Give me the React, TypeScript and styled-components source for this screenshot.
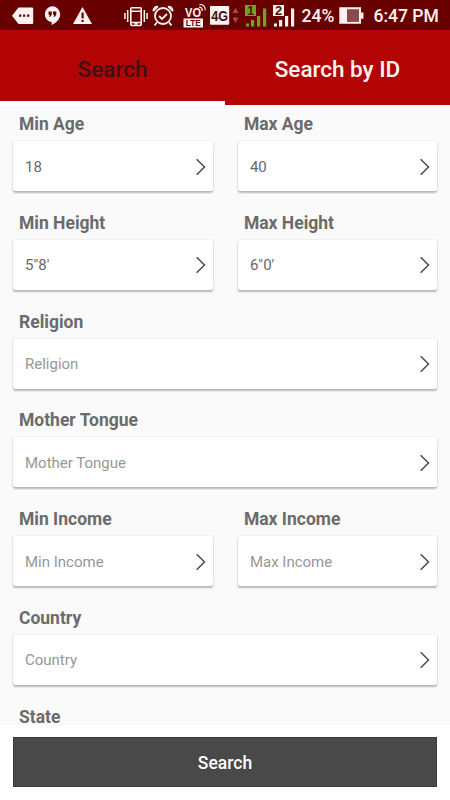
import React from "react";
import styled, { createGlobalStyle } from "styled-components";

const GlobalStyle = createGlobalStyle`
  * { box-sizing: border-box; }
  body { margin: 0; background: #fff; font-family: Roboto, sans-serif; }
  button { font-family: inherit; border: 0; padding: 0; }
`;

const Screen = styled.div`
  width: 450px;
  height: 800px;
  display: flex;
  flex-direction: column;
  overflow: hidden;
  background: #fff;
`;

const StatusBar = styled.header`
  height: 30px;
  flex: none;
  display: flex;
  align-items: stretch;
  background: #680000;
  color: #fff3f1;
`;

const StatusIcon = styled.svg<{ $gap: number }>`
  flex: none;
  display: block;
  height: 30px;
  margin-left: ${(p) => p.$gap}px;
  font-family: "Liberation Sans", sans-serif;
  font-weight: 700;
`;

const StatusText = styled.span<{ $gap: number; $width: number }>`
  flex: none;
  width: ${(p) => p.$width}px;
  margin-left: ${(p) => p.$gap}px;
  font-size: 17.5px;
  font-weight: 500;
  line-height: 33px;
  white-space: nowrap;
`;

const Tabs = styled.nav`
  height: 75px;
  flex: none;
  display: grid;
  grid-template-columns: 1fr 1fr;
`;

const Tab = styled.button<{ $active?: boolean }>`
  background: #b20404;
  border-bottom: 4px solid ${(p) => (p.$active ? "#fff" : "#b20404")};
  color: ${(p) => (p.$active ? "#3e1014" : "#fff3f1")};
  font-size: 22.5px;
  font-weight: 500;
  line-height: 26px;
  padding-top: 6px;
`;

const Form = styled.main`
  height: 620px;
  flex: none;
  overflow: hidden;
  background: #fafafa;
`;

const FieldRow = styled.div`
  display: flex;
  gap: 25px;
  height: 98.75px;
  padding: 0 12.6px;
`;

const Field = styled.div`
  flex: 1;
  min-width: 0;
`;

const Label = styled.div`
  height: 36px;
  padding: 9px 0 0 6.4px;
  font-size: 17.5px;
  font-weight: 700;
  line-height: 21px;
  color: #6b6b6b;
`;

const Picker = styled.div<{ $filled: boolean }>`
  height: 50px;
  display: flex;
  align-items: center;
  justify-content: space-between;
  padding: 1px 7px 0 12.4px;
  border-radius: 2.5px;
  background: #fff;
  box-shadow: 0 1.5px 2px rgba(0, 0, 0, 0.26), 0 0 1.5px rgba(0, 0, 0, 0.14);
  font-size: 15px;
  color: ${(p) => (p.$filled ? "#686868" : "#979797")};
`;

const Chevron = styled.svg`
  display: block;
  width: 10px;
  height: 18px;
  fill: none;
  stroke: #4c4c4c;
  stroke-width: 1.5;
`;

const Footer = styled.footer`
  flex: 1;
  padding: 12.4px 12.6px 0;
  background: #fff;
`;

const SearchButton = styled.button`
  display: block;
  width: 100%;
  height: 50px;
  background: #494949;
  border: 1px solid #3b3b3b;
  color: #fff;
  font-size: 17.5px;
  font-weight: 500;
  line-height: 51px;
`;

type FieldData = { label: string; value?: string };

const rows: FieldData[][] = [
  [{ label: "Min Age", value: "18" }, { label: "Max Age", value: "40" }],
  [{ label: "Min Height", value: "5\"8'" }, { label: "Max Height", value: "6\"0'" }],
  [{ label: "Religion" }],
  [{ label: "Mother Tongue" }],
  [{ label: "Min Income" }, { label: "Max Income" }],
  [{ label: "Country" }],
];

function SimSignal({ sim, color, gap }: { sim: string; color: string; gap: number }) {
  return (
    <StatusIcon $gap={gap} width="22" viewBox="0 0 22 30" fill={color}>
      <path d="M0 5h11v11H0z" />
      <path d="M1 23.500h3v3H1zM6 20h3.200v6.500H6zM12 16h3.200v10.500H12zM18 8.500h3.200v18H18z" />
      <text x="5.500" y="15" fontSize="13" textAnchor="middle" fill="#4a1600">{sim}</text>
    </StatusIcon>
  );
}

export default function App() {
  return (
    <Screen>
      <GlobalStyle />
      <StatusBar>
        <StatusIcon $gap={12} width="22" viewBox="0 0 22 30" fill="#fff3f1">
          <path d="M6.500 7.500H20q1.200 0 1.200 1.200v14q0 1.200-1.200 1.200H6.500L0 15.700z" />
          <path fill="#680000" d="M7 14.500h2.300v2.300H7zM11 14.500h2.300v2.300H11zM15 14.500h2.300v2.300H15z" />
        </StatusIcon>
        <StatusIcon $gap={10} width="17" viewBox="0 0 17 30" fill="#fff3f1">
          <path d="M8.200 6.300a8 8 0 0 1 8 8c0 4.500-3.600 8.500-8.500 10.700v-2.800A8 8 0 0 1 8.200 6.300z" />
          <path fill="#680000" d="M4.500 11.500h3.300v3.300l-1.500 2H5l.7-2H4.500zM9 11.500h3.300v3.300l-1.500 2H9.500l.7-2H9z" />
        </StatusIcon>
        <StatusIcon $gap={12} width="19" viewBox="0 0 19 30" fill="#fff3f1">
          <path d="M9.500 7L19 24H0z" />
          <path fill="#680000" d="M8.500 12.500h2.200v6H8.500zM8.500 20h2.200v2H8.500z" />
        </StatusIcon>
        <StatusIcon $gap={32} width="24" viewBox="0 0 24 30" fill="none" stroke="#fff3f1" strokeWidth="1.5">
          <path d="M.9 13v6M3.700 10v12M20.300 10v12M23.100 13v6" />
          <rect x="6.800" y="7.700" width="10.400" height="17.800" rx="1" strokeWidth="1.600" />
          <path d="M7 11.200h10M7 22.500h10M10.500 24h3" />
        </StatusIcon>
        <StatusIcon $gap={4} width="22" viewBox="0 0 22 30" fill="none" stroke="#fff3f1" strokeWidth="1.800">
          <circle cx="11" cy="16" r="8" />
          <path d="M7 16l3 3 5-5M4.800 22.500L2.500 25.500M17.200 22.500l2.300 3M1 11.200L5.500 6.600M21 11.200l-4.500-4.600" />
          <path strokeWidth="1.300" d="M6.200 6.800C4 5.700 1 8 1.300 11M15.800 6.800c2.200-1.100 5.200 1.200 4.900 4.200" />
        </StatusIcon>
        <StatusIcon $gap={9} width="24" viewBox="0 0 24 30" fill="#fff3f1">
          <text x="2" y="17" fontSize="12" textLength="16" lengthAdjust="spacingAndGlyphs">VO</text>
          <path d="M.5 18.500h19.500v9H.5z" />
          <text x="2.800" y="26.200" fontSize="9" textLength="15" lengthAdjust="spacingAndGlyphs" fill="#680000">LTE</text>
          <path fill="none" stroke="#fff3f1" strokeWidth="1.200" d="M16 7.200q3.300 0 3.300 3.700M16.500 4.300q5.800 0 5.800 6" />
        </StatusIcon>
        <StatusIcon $gap={3} width="20" viewBox="0 0 20 30" fill="#fff3f1">
          <rect x="0" y="6" width="19.200" height="18.700" rx="1" />
          <text x="1.200" y="20.500" fontSize="14" textLength="16.800" lengthAdjust="spacingAndGlyphs" fill="#421010">4G</text>
        </StatusIcon>
        <StatusIcon $gap={2} width="7" viewBox="0 0 7 30" fill="#985052">
          <path d="M3.500 7.800L6.500 13H.5zM3.500 23L.5 17.500h6z" />
        </StatusIcon>
        <SimSignal sim="1" color="#73a51b" gap={5.5} />
        <SimSignal sim="2" color="#fff3f1" gap={6.5} />
        <StatusText $gap={6.5} $width={34}>24%</StatusText>
        <StatusIcon $gap={3.500} width="25" viewBox="0 0 25 30">
          <path fill="#fff3f1" d="M.3 7.300H22v5.200h2.500v6.200H22v5.100H.3z" />
          <path fill="#8e484b" d="M8 9.200h12v12.700H8z" />
        </StatusIcon>
        <StatusText $gap={9.500} $width={68}>6:47 PM</StatusText>
      </StatusBar>
      <Tabs>
        <Tab $active>Search</Tab>
        <Tab>Search by ID</Tab>
      </Tabs>
      <Form>
        {rows.map((fields) => (
          <FieldRow key={fields[0].label}>
            {fields.map(({ label, value }) => (
              <Field key={label}>
                <Label>{label}</Label>
                <Picker $filled={value !== undefined}>
                  {value ?? label}
                  <Chevron viewBox="0 0 10 18"><path d="M.7 1.200L8.500 9L.7 16.800" /></Chevron>
                </Picker>
              </Field>
            ))}
          </FieldRow>
        ))}
        <FieldRow>
          <Field>
            <Label>State</Label>
          </Field>
        </FieldRow>
      </Form>
      <Footer>
        <SearchButton>Search</SearchButton>
      </Footer>
    </Screen>
  );
}
